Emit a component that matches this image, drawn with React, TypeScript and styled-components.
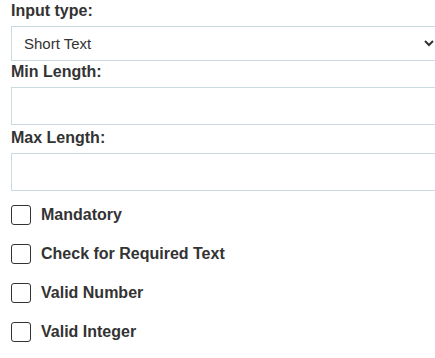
import React, { useState } from "react";
import styled, { createGlobalStyle } from "styled-components";

const GlobalStyle = createGlobalStyle`
  html, body {
    margin: 0;
    padding: 0;
    background: #ffffff;
    overflow: hidden;
  }
  body {
    font-family: "Liberation Sans", Arial, sans-serif;
    color: #333333;
  }
`;

const Form = styled.div`
  width: 438px;
  padding: 2px 0 0 11px;
  box-sizing: border-box;
`;

const Field = styled.div<{ $gap: number }>`
  display: flex;
  flex-direction: column;
  margin-bottom: ${({ $gap }) => $gap}px;
`;

const Label = styled.label`
  font-size: 16px;
  font-weight: 700;
  line-height: 17px;
  color: #333333;
  margin-bottom: 7px;
`;

const Select = styled.select`
  width: 100%;
  height: 35px;
  box-sizing: border-box;
  border: 1px solid #c9dbe0;
  border-radius: 0;
  background: #ffffff;
  padding: 0 8px;
  font-family: "Liberation Sans", Arial, sans-serif;
  font-size: 15px;
  color: #333333;
  outline: none;
`;

const TextInput = styled.input`
  width: 100%;
  height: 38px;
  box-sizing: border-box;
  border: 1px solid #c9dbe0;
  border-radius: 0;
  padding: 0 10px;
  font-family: "Liberation Sans", Arial, sans-serif;
  font-size: 15px;
  outline: none;
`;

const Checks = styled.div`
  display: flex;
  flex-direction: column;
  gap: 19px;
  margin-top: 14px;
`;

const CheckRow = styled.label`
  display: flex;
  align-items: center;
  gap: 10px;
  cursor: pointer;
`;

const Box = styled.input`
  appearance: none;
  width: 20px;
  height: 20px;
  margin: 0;
  box-sizing: border-box;
  border: 1px solid #333333;
  border-radius: 3px;
  background: #ffffff;
  &:checked {
    background: #333333;
  }
`;

const CheckText = styled.span`
  font-size: 16px;
  font-weight: 700;
  line-height: 20px;
  color: #333333;
`;

const validations = [
  "Mandatory",
  "Check for Required Text",
  "Valid Number",
  "Valid Integer",
];

export default function App() {
  const [type, setType] = useState("short");

  return (
    <>
      <GlobalStyle />
      <Form>
        <Field $gap={2}>
          <Label>Input type:</Label>
          <Select value={type} onChange={(e) => setType(e.target.value)}>
            <option value="short">Short Text</option>
            <option value="long">Long Text</option>
            <option value="number">Number</option>
          </Select>
        </Field>
        <Field $gap={4}>
          <Label>Min Length:</Label>
          <TextInput type="text" />
        </Field>
        <Field $gap={0}>
          <Label>Max Length:</Label>
          <TextInput type="text" />
        </Field>
        <Checks>
          {validations.map((v) => (
            <CheckRow key={v}>
              <Box type="checkbox" />
              <CheckText>{v}</CheckText>
            </CheckRow>
          ))}
        </Checks>
      </Form>
    </>
  );
}
